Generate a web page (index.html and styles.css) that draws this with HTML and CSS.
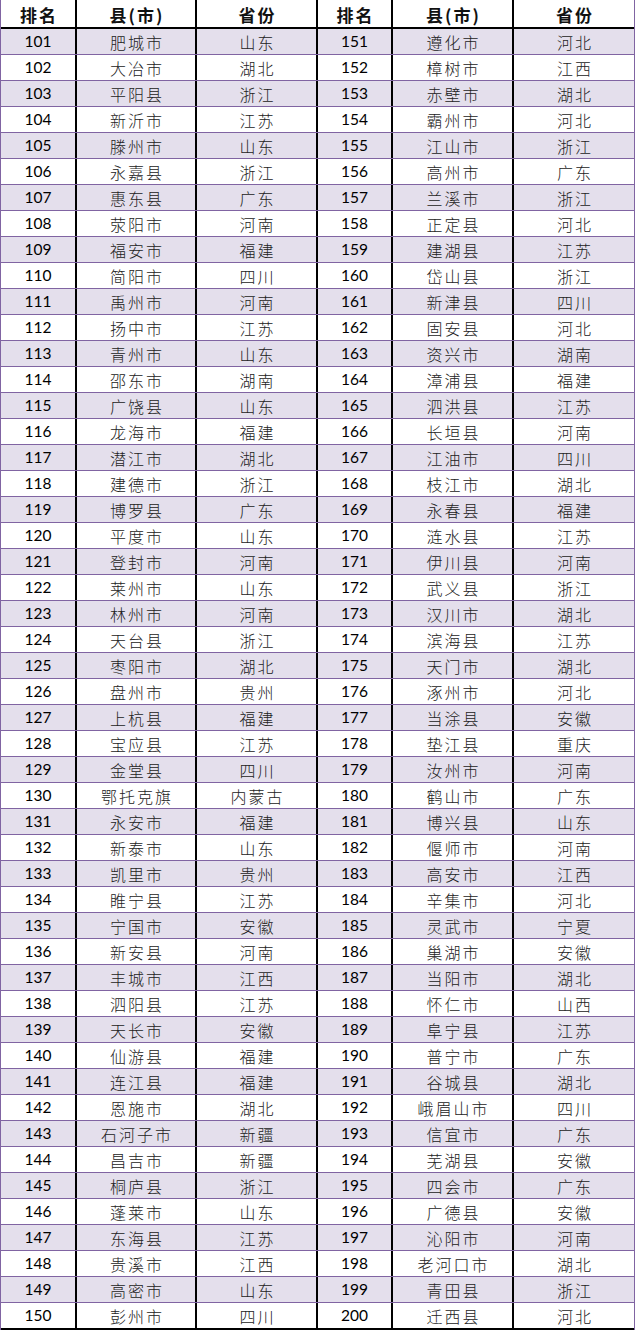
FILE: index.html
```html
<!DOCTYPE html>
<html lang="zh-CN">
<head>
<meta charset="utf-8">
<title>排名 151-200</title>
<link rel="stylesheet" href="styles.css">
</head>
<body>
<div class="table">
  <div class="row head">
    <div class="c">排名</div><div class="c">县(市)</div><div class="c">省份</div>
    <div class="c">排名</div><div class="c">县(市)</div><div class="c">省份</div>
  </div>
  <div class="row alt"><div class="c n">101</div><div class="c t">肥城市</div><div class="c t">山东</div><div class="c n">151</div><div class="c t">遵化市</div><div class="c t">河北</div></div>
  <div class="row"><div class="c n">102</div><div class="c t">大冶市</div><div class="c t">湖北</div><div class="c n">152</div><div class="c t">樟树市</div><div class="c t">江西</div></div>
  <div class="row alt"><div class="c n">103</div><div class="c t">平阳县</div><div class="c t">浙江</div><div class="c n">153</div><div class="c t">赤壁市</div><div class="c t">湖北</div></div>
  <div class="row"><div class="c n">104</div><div class="c t">新沂市</div><div class="c t">江苏</div><div class="c n">154</div><div class="c t">霸州市</div><div class="c t">河北</div></div>
  <div class="row alt"><div class="c n">105</div><div class="c t">滕州市</div><div class="c t">山东</div><div class="c n">155</div><div class="c t">江山市</div><div class="c t">浙江</div></div>
  <div class="row"><div class="c n">106</div><div class="c t">永嘉县</div><div class="c t">浙江</div><div class="c n">156</div><div class="c t">高州市</div><div class="c t">广东</div></div>
  <div class="row alt"><div class="c n">107</div><div class="c t">惠东县</div><div class="c t">广东</div><div class="c n">157</div><div class="c t">兰溪市</div><div class="c t">浙江</div></div>
  <div class="row"><div class="c n">108</div><div class="c t">荥阳市</div><div class="c t">河南</div><div class="c n">158</div><div class="c t">正定县</div><div class="c t">河北</div></div>
  <div class="row alt"><div class="c n">109</div><div class="c t">福安市</div><div class="c t">福建</div><div class="c n">159</div><div class="c t">建湖县</div><div class="c t">江苏</div></div>
  <div class="row"><div class="c n">110</div><div class="c t">简阳市</div><div class="c t">四川</div><div class="c n">160</div><div class="c t">岱山县</div><div class="c t">浙江</div></div>
  <div class="row alt"><div class="c n">111</div><div class="c t">禹州市</div><div class="c t">河南</div><div class="c n">161</div><div class="c t">新津县</div><div class="c t">四川</div></div>
  <div class="row"><div class="c n">112</div><div class="c t">扬中市</div><div class="c t">江苏</div><div class="c n">162</div><div class="c t">固安县</div><div class="c t">河北</div></div>
  <div class="row alt"><div class="c n">113</div><div class="c t">青州市</div><div class="c t">山东</div><div class="c n">163</div><div class="c t">资兴市</div><div class="c t">湖南</div></div>
  <div class="row"><div class="c n">114</div><div class="c t">邵东市</div><div class="c t">湖南</div><div class="c n">164</div><div class="c t">漳浦县</div><div class="c t">福建</div></div>
  <div class="row alt"><div class="c n">115</div><div class="c t">广饶县</div><div class="c t">山东</div><div class="c n">165</div><div class="c t">泗洪县</div><div class="c t">江苏</div></div>
  <div class="row"><div class="c n">116</div><div class="c t">龙海市</div><div class="c t">福建</div><div class="c n">166</div><div class="c t">长垣县</div><div class="c t">河南</div></div>
  <div class="row alt"><div class="c n">117</div><div class="c t">潜江市</div><div class="c t">湖北</div><div class="c n">167</div><div class="c t">江油市</div><div class="c t">四川</div></div>
  <div class="row"><div class="c n">118</div><div class="c t">建德市</div><div class="c t">浙江</div><div class="c n">168</div><div class="c t">枝江市</div><div class="c t">湖北</div></div>
  <div class="row alt"><div class="c n">119</div><div class="c t">博罗县</div><div class="c t">广东</div><div class="c n">169</div><div class="c t">永春县</div><div class="c t">福建</div></div>
  <div class="row"><div class="c n">120</div><div class="c t">平度市</div><div class="c t">山东</div><div class="c n">170</div><div class="c t">涟水县</div><div class="c t">江苏</div></div>
  <div class="row alt"><div class="c n">121</div><div class="c t">登封市</div><div class="c t">河南</div><div class="c n">171</div><div class="c t">伊川县</div><div class="c t">河南</div></div>
  <div class="row"><div class="c n">122</div><div class="c t">莱州市</div><div class="c t">山东</div><div class="c n">172</div><div class="c t">武义县</div><div class="c t">浙江</div></div>
  <div class="row alt"><div class="c n">123</div><div class="c t">林州市</div><div class="c t">河南</div><div class="c n">173</div><div class="c t">汉川市</div><div class="c t">湖北</div></div>
  <div class="row"><div class="c n">124</div><div class="c t">天台县</div><div class="c t">浙江</div><div class="c n">174</div><div class="c t">滨海县</div><div class="c t">江苏</div></div>
  <div class="row alt"><div class="c n">125</div><div class="c t">枣阳市</div><div class="c t">湖北</div><div class="c n">175</div><div class="c t">天门市</div><div class="c t">湖北</div></div>
  <div class="row"><div class="c n">126</div><div class="c t">盘州市</div><div class="c t">贵州</div><div class="c n">176</div><div class="c t">涿州市</div><div class="c t">河北</div></div>
  <div class="row alt"><div class="c n">127</div><div class="c t">上杭县</div><div class="c t">福建</div><div class="c n">177</div><div class="c t">当涂县</div><div class="c t">安徽</div></div>
  <div class="row"><div class="c n">128</div><div class="c t">宝应县</div><div class="c t">江苏</div><div class="c n">178</div><div class="c t">垫江县</div><div class="c t">重庆</div></div>
  <div class="row alt"><div class="c n">129</div><div class="c t">金堂县</div><div class="c t">四川</div><div class="c n">179</div><div class="c t">汝州市</div><div class="c t">河南</div></div>
  <div class="row"><div class="c n">130</div><div class="c t">鄂托克旗</div><div class="c t">内蒙古</div><div class="c n">180</div><div class="c t">鹤山市</div><div class="c t">广东</div></div>
  <div class="row alt"><div class="c n">131</div><div class="c t">永安市</div><div class="c t">福建</div><div class="c n">181</div><div class="c t">博兴县</div><div class="c t">山东</div></div>
  <div class="row"><div class="c n">132</div><div class="c t">新泰市</div><div class="c t">山东</div><div class="c n">182</div><div class="c t">偃师市</div><div class="c t">河南</div></div>
  <div class="row alt"><div class="c n">133</div><div class="c t">凯里市</div><div class="c t">贵州</div><div class="c n">183</div><div class="c t">高安市</div><div class="c t">江西</div></div>
  <div class="row"><div class="c n">134</div><div class="c t">睢宁县</div><div class="c t">江苏</div><div class="c n">184</div><div class="c t">辛集市</div><div class="c t">河北</div></div>
  <div class="row alt"><div class="c n">135</div><div class="c t">宁国市</div><div class="c t">安徽</div><div class="c n">185</div><div class="c t">灵武市</div><div class="c t">宁夏</div></div>
  <div class="row"><div class="c n">136</div><div class="c t">新安县</div><div class="c t">河南</div><div class="c n">186</div><div class="c t">巢湖市</div><div class="c t">安徽</div></div>
  <div class="row alt"><div class="c n">137</div><div class="c t">丰城市</div><div class="c t">江西</div><div class="c n">187</div><div class="c t">当阳市</div><div class="c t">湖北</div></div>
  <div class="row"><div class="c n">138</div><div class="c t">泗阳县</div><div class="c t">江苏</div><div class="c n">188</div><div class="c t">怀仁市</div><div class="c t">山西</div></div>
  <div class="row alt"><div class="c n">139</div><div class="c t">天长市</div><div class="c t">安徽</div><div class="c n">189</div><div class="c t">阜宁县</div><div class="c t">江苏</div></div>
  <div class="row"><div class="c n">140</div><div class="c t">仙游县</div><div class="c t">福建</div><div class="c n">190</div><div class="c t">普宁市</div><div class="c t">广东</div></div>
  <div class="row alt"><div class="c n">141</div><div class="c t">连江县</div><div class="c t">福建</div><div class="c n">191</div><div class="c t">谷城县</div><div class="c t">湖北</div></div>
  <div class="row"><div class="c n">142</div><div class="c t">恩施市</div><div class="c t">湖北</div><div class="c n">192</div><div class="c t">峨眉山市</div><div class="c t">四川</div></div>
  <div class="row alt"><div class="c n">143</div><div class="c t">石河子市</div><div class="c t">新疆</div><div class="c n">193</div><div class="c t">信宜市</div><div class="c t">广东</div></div>
  <div class="row"><div class="c n">144</div><div class="c t">昌吉市</div><div class="c t">新疆</div><div class="c n">194</div><div class="c t">芜湖县</div><div class="c t">安徽</div></div>
  <div class="row alt"><div class="c n">145</div><div class="c t">桐庐县</div><div class="c t">浙江</div><div class="c n">195</div><div class="c t">四会市</div><div class="c t">广东</div></div>
  <div class="row"><div class="c n">146</div><div class="c t">蓬莱市</div><div class="c t">山东</div><div class="c n">196</div><div class="c t">广德县</div><div class="c t">安徽</div></div>
  <div class="row alt"><div class="c n">147</div><div class="c t">东海县</div><div class="c t">江苏</div><div class="c n">197</div><div class="c t">沁阳市</div><div class="c t">河南</div></div>
  <div class="row"><div class="c n">148</div><div class="c t">贵溪市</div><div class="c t">江西</div><div class="c n">198</div><div class="c t">老河口市</div><div class="c t">湖北</div></div>
  <div class="row alt"><div class="c n">149</div><div class="c t">高密市</div><div class="c t">山东</div><div class="c n">199</div><div class="c t">青田县</div><div class="c t">浙江</div></div>
  <div class="row last"><div class="c n">150</div><div class="c t">彭州市</div><div class="c t">四川</div><div class="c n">200</div><div class="c t">迁西县</div><div class="c t">河北</div></div>
</div>
</body>
</html>
```

FILE: styles.css
```css
html, body {
  margin: 0;
  padding: 0;
  background: #ffffff;
}

.table {
  width: 635px;
  box-sizing: border-box;
  border-left: 1px solid #8064a2;
  border-right: 1px solid #8064a2;
}

.row {
  display: grid;
  grid-template-columns: 76px 120px 121px 75px 121px 120px;
  height: 26px;
  box-sizing: border-box;
  border-bottom: 1px solid #8064a2;
  background: #ffffff;
}

.row.alt {
  background: #e4dfec;
}

.row.head {
  height: 29px;
  border-bottom: 2px solid #000000;
}

.row.last {
  height: 27px;
  border-bottom: 2px solid #000000;
}

.c {
  box-sizing: border-box;
  border-right: 2px solid #000000;
  display: flex;
  align-items: center;
  justify-content: center;
  white-space: nowrap;
  line-height: 1;
}

.c:last-child {
  border-right: none;
}

.head .c {
  font-family: "Noto Sans CJK SC", sans-serif;
  font-weight: 700;
  font-size: 17px;
  letter-spacing: 2px;
  text-indent: 2px;
  color: #111111;
  padding-top: 1px;
}

.n {
  font-family: Lato, "Liberation Sans", sans-serif;
  font-size: 15.5px;
  color: #000000;
  padding-top: 1px;
}

.t {
  font-family: "Noto Sans CJK SC", sans-serif;
  font-weight: 300;
  font-size: 16px;
  letter-spacing: 2px;
  text-indent: 2px;
  color: #222222;
}
```
